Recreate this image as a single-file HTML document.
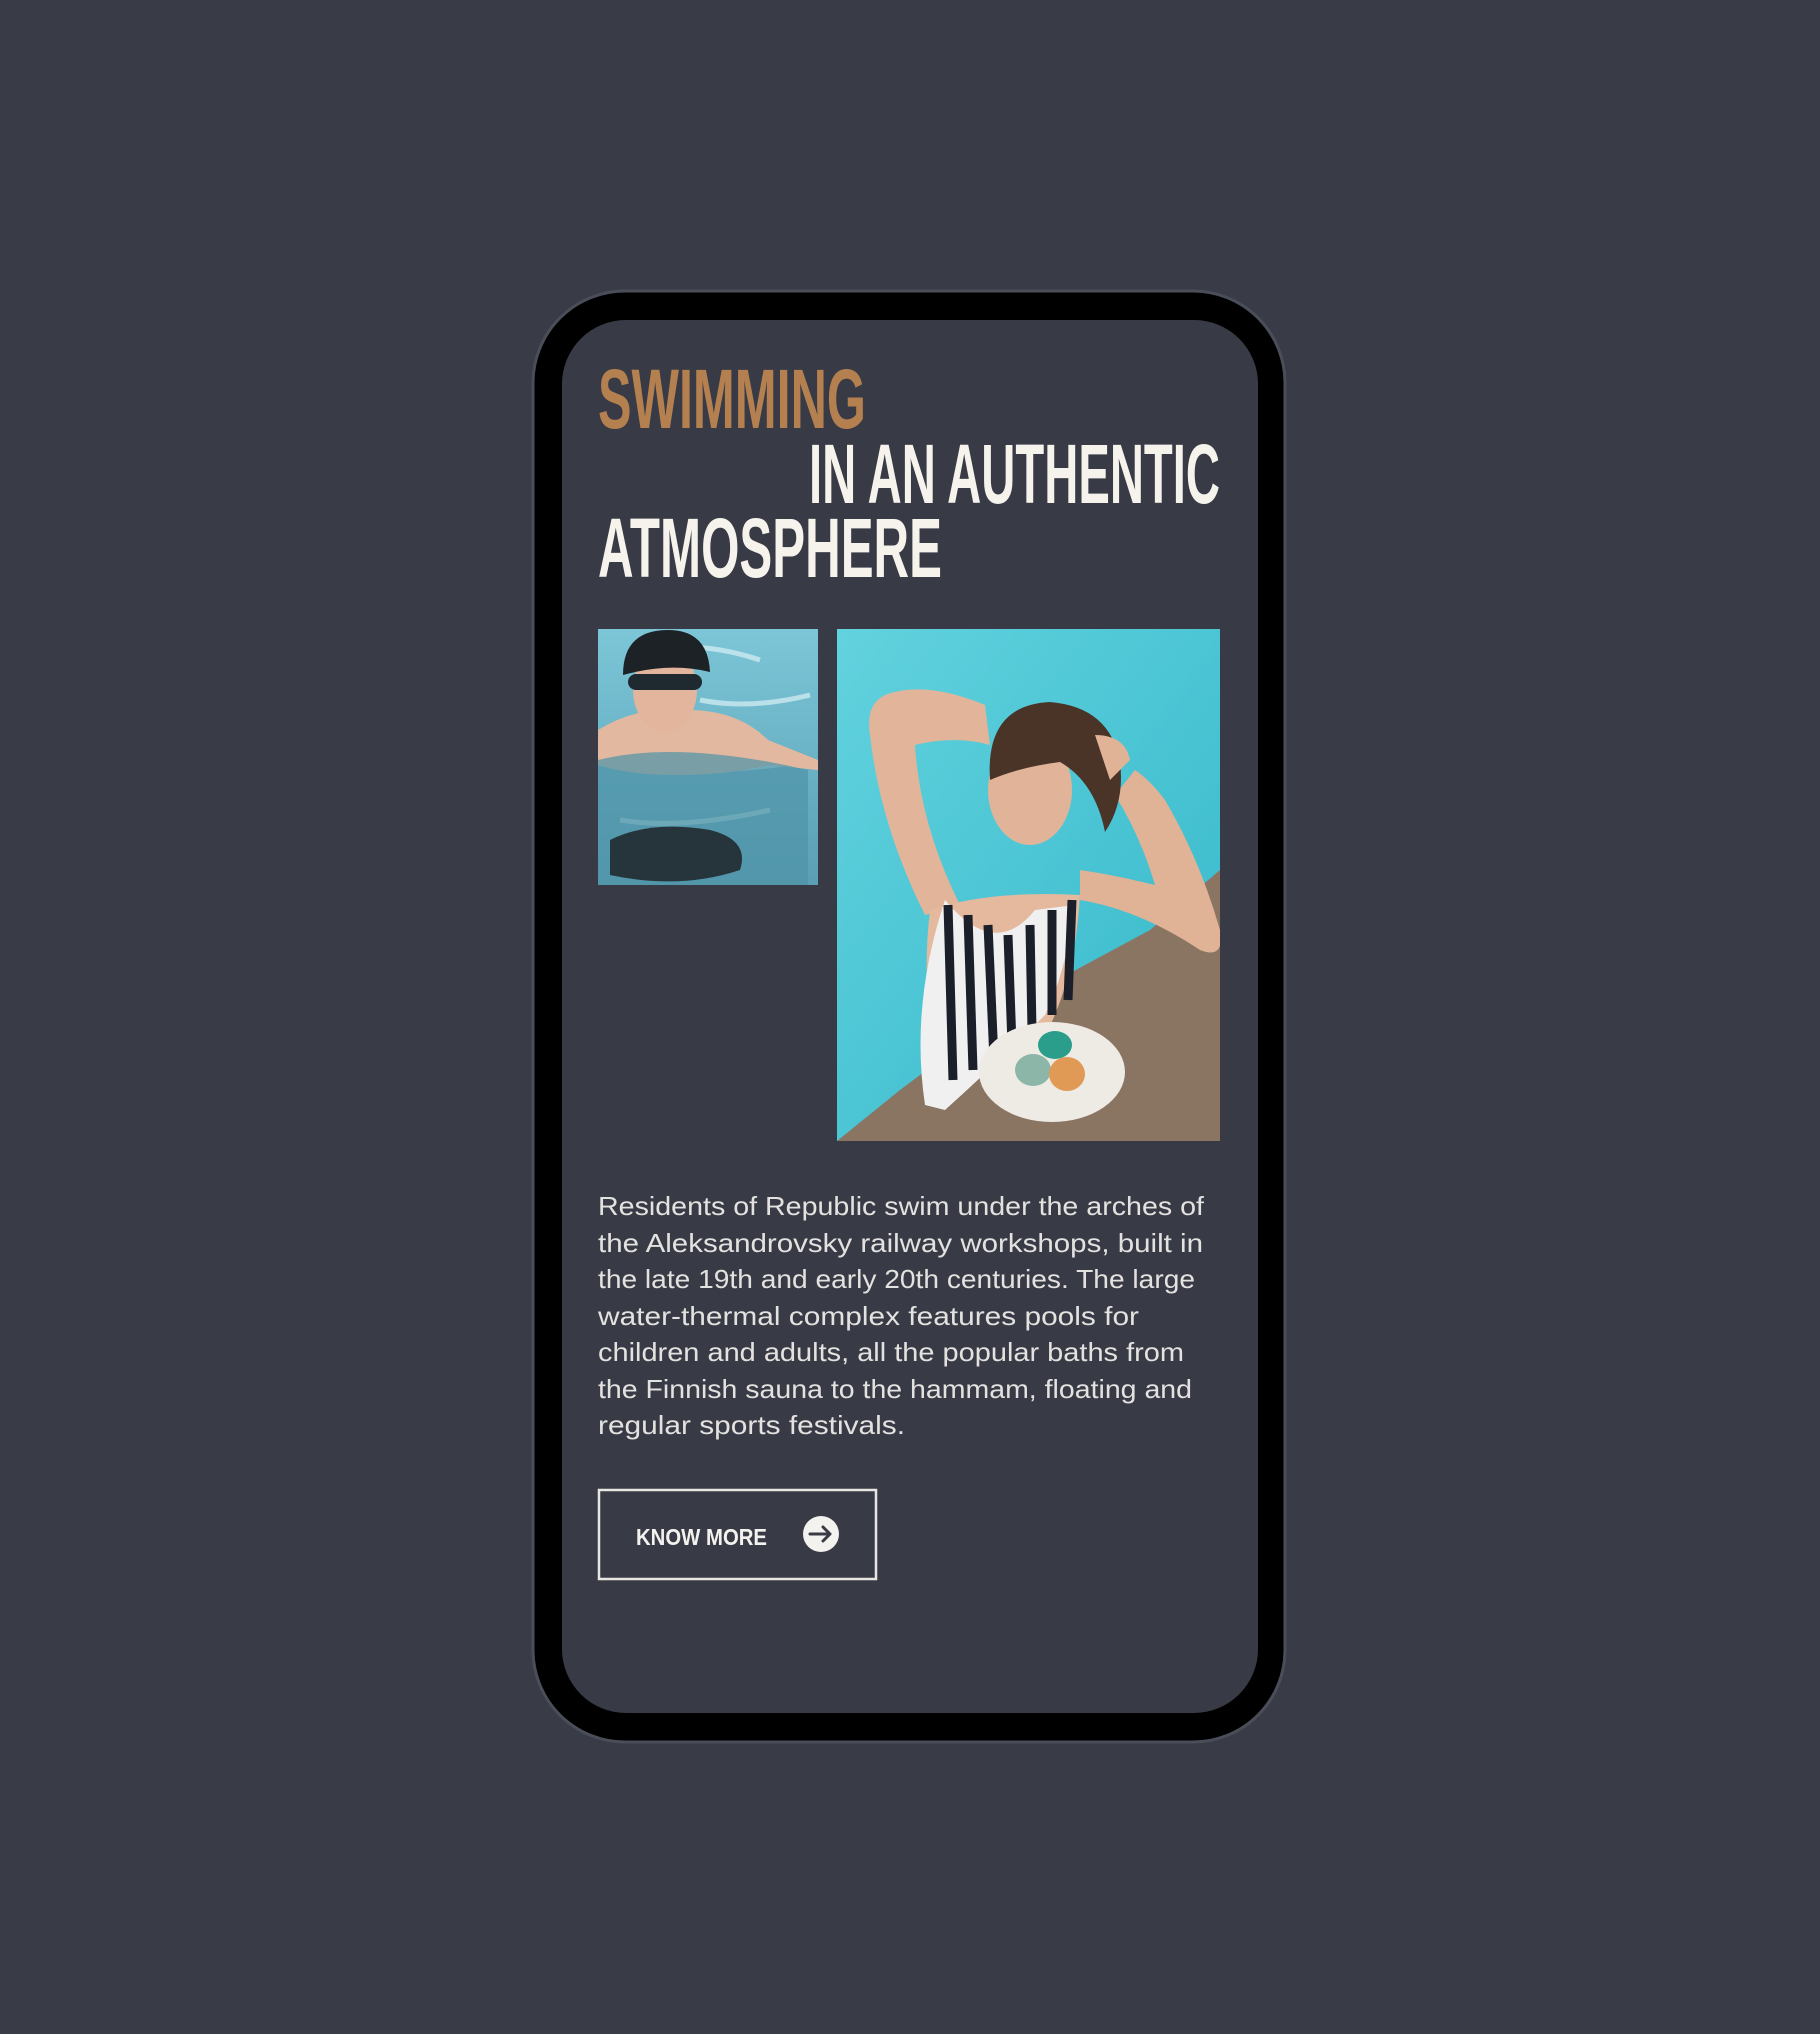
<!DOCTYPE html>
<html><head><meta charset="utf-8"><style>
html,body{margin:0;padding:0;background:#393c46;width:1820px;height:2034px;overflow:hidden}
svg{display:block}
</style></head><body>
<svg width="1820" height="2034" viewBox="0 0 1820 2034" xmlns="http://www.w3.org/2000/svg">
<defs>
<linearGradient id="w1" x1="0" y1="0" x2="0" y2="1"><stop offset="0" stop-color="#7cc6d8"/><stop offset="1" stop-color="#5a9fb3"/></linearGradient>
<linearGradient id="w2" x1="0" y1="0" x2="1" y2="1"><stop offset="0" stop-color="#62d2de"/><stop offset="1" stop-color="#35b8ca"/></linearGradient>
<clipPath id="c1"><rect x="598" y="629" width="220" height="256"/></clipPath>
<clipPath id="c2"><rect x="837" y="629" width="383" height="512"/></clipPath>
</defs>
<rect width="1820" height="2034" fill="#393c46"/>
<rect x="533" y="291" width="752" height="1451" rx="92" fill="#000" stroke="#4a4e59" stroke-width="3"/>
<rect x="562" y="320" width="696" height="1393" rx="64" fill="#383b45"/>

<g font-family="Liberation Sans, sans-serif" font-weight="bold" font-size="84">
<text x="598" y="428" fill="#b5804f" textLength="268" lengthAdjust="spacingAndGlyphs">SWIMMING</text>
<text x="809" y="503" fill="#f6f2ec" textLength="411" lengthAdjust="spacingAndGlyphs">IN AN AUTHENTIC</text>
<text x="598" y="577" fill="#f6f2ec" textLength="344" lengthAdjust="spacingAndGlyphs">ATMOSPHERE</text>
</g>

<g clip-path="url(#c1)">
<rect x="598" y="629" width="220" height="256" fill="url(#w1)"/>
<path d="M640 650 q60 -10 120 10 M700 700 q50 10 110 -5 M610 760 q80 20 200 0 M620 820 q60 10 150 -10" stroke="#d8f0f5" stroke-width="5" fill="none" opacity=".7"/>
<path d="M598 730 q40 -25 90 -20 q50 0 80 30 l50 20 v10 l-50 -5 q-40 10 -90 10 q-50 0 -80 -10z" fill="#e2b9a0"/>
<ellipse cx="665" cy="690" rx="32" ry="42" fill="#e3b59c"/>
<path d="M623 675 q0 -45 45 -45 q40 0 42 42 q-40 -10 -87 3z" fill="#1d2226"/>
<rect x="628" y="674" width="74" height="16" rx="8" fill="#1f2a30"/>
<path d="M598 760 q80 -20 210 10 v115 h-210z" fill="#4f93a6" opacity=".7"/>
<path d="M610 840 q40 -20 100 -10 q40 10 30 40 q-60 20 -130 5z" fill="#26343c"/>
</g>

<g clip-path="url(#c2)">
<rect x="837" y="629" width="383" height="512" fill="url(#w2)"/>
<path d="M1220 870 L1150 930 L1020 1000 L900 1090 L837 1141 L1220 1141z" fill="#8a7462"/>
<!-- left arm -->
<path d="M985 705 q-60 -25 -100 -10 q-20 10 -15 40 q10 90 55 180 l35 -10 q-40 -80 -45 -160 q40 -10 75 0z" fill="#e2b59a"/>
<!-- right arm -->
<path d="M1080 900 q60 10 120 50 q25 10 20 -20 q-20 -70 -55 -130 q-15 -20 -30 -30 l-20 25 q25 40 40 90 q-40 -10 -75 -15z" fill="#e0b296"/>
<!-- torso -->
<path d="M930 910 q60 -20 150 -15 q-5 90 -40 150 l-100 20 q-20 -70 -10 -155z" fill="#e4b99e"/>
<!-- head -->
<ellipse cx="1030" cy="790" rx="42" ry="55" fill="#e1b49a"/>
<path d="M990 780 q-5 -75 60 -78 q60 5 70 60 q5 40 -15 70 q-10 -50 -45 -70 q-40 5 -70 18z" fill="#4a3428"/>
<path d="M1095 735 q30 0 35 25 l-20 20z" fill="#e0b296"/>
<!-- swimsuit -->
<path d="M945 900 q50 60 90 10 l40 -5 q-10 70 -30 110 q-50 50 -100 95 l-20 -5 q-15 -100 20 -205z" fill="#f0f0f0"/>
<g stroke="#1a1f2a" stroke-width="9">
<line x1="948" y1="905" x2="953" y2="1080"/><line x1="968" y1="915" x2="973" y2="1070"/><line x1="988" y1="925" x2="994" y2="1060"/><line x1="1008" y1="935" x2="1012" y2="1045"/><line x1="1030" y1="925" x2="1032" y2="1030"/><line x1="1052" y1="910" x2="1052" y2="1015"/><line x1="1072" y1="900" x2="1068" y2="1000"/>
</g>
<ellipse cx="1052" cy="1072" rx="73" ry="50" fill="#eeeae4"/>
<ellipse cx="1055" cy="1045" rx="17" ry="14" fill="#2a9e8a"/>
<ellipse cx="1033" cy="1070" rx="18" ry="16" fill="#8bb6a8"/>
<ellipse cx="1067" cy="1074" rx="18" ry="17" fill="#e09a55"/>
</g>

<g font-family="Liberation Sans, sans-serif" font-size="26" fill="#e4e2e0">
<text x="598" y="1215" textLength="606" lengthAdjust="spacingAndGlyphs">Residents of Republic swim under the arches of</text>
<text x="598" y="1252" textLength="605" lengthAdjust="spacingAndGlyphs">the Aleksandrovsky railway workshops, built in</text>
<text x="598" y="1288" textLength="597" lengthAdjust="spacingAndGlyphs">the late 19th and early 20th centuries. The large</text>
<text x="598" y="1325" textLength="541" lengthAdjust="spacingAndGlyphs">water-thermal complex features pools for</text>
<text x="598" y="1361" textLength="586" lengthAdjust="spacingAndGlyphs">children and adults, all the popular baths from</text>
<text x="598" y="1398" textLength="594" lengthAdjust="spacingAndGlyphs">the Finnish sauna to the hammam, floating and</text>
<text x="598" y="1434" textLength="307" lengthAdjust="spacingAndGlyphs">regular sports festivals.</text>
</g>

<rect x="599" y="1490" width="277" height="89" fill="none" stroke="#e8e6e3" stroke-width="2.5"/>
<text x="636" y="1545" font-family="Liberation Sans, sans-serif" font-weight="bold" font-size="23" fill="#f4f2ef" textLength="131" lengthAdjust="spacingAndGlyphs">KNOW MORE</text>
<circle cx="821" cy="1534" r="18" fill="#f4f2ef"/>
<path d="M810 1534 h20 M823 1527 l7 7 l-7 7" stroke="#383b45" stroke-width="3" fill="none" stroke-linecap="round" stroke-linejoin="round"/>
</svg>
</body></html>
